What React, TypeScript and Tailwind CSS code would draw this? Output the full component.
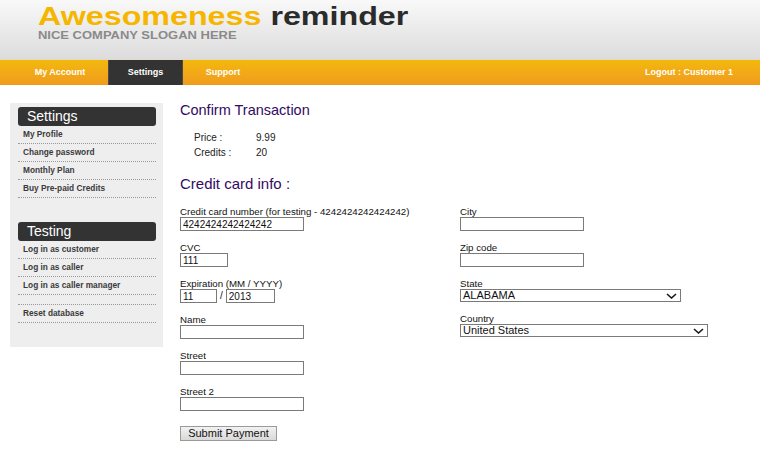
import React from "react";

const Chevron = () => (
  <svg width="11" height="6" viewBox="0 0 11 6" fill="none">
    <path d="M1 1 L5.5 5 L10 1" stroke="#1a1a1a" strokeWidth="1.6" />
  </svg>
);

const Field = ({ label, children }: { label: string; children: React.ReactNode }) => (
  <div className="mb-[12px]">
    <label className="block h-[10px] leading-[10px] text-[9.7px] text-[#111]">{label}</label>
    {children}
  </div>
);

const TextBox = ({ w, value = "" }: { w: string; value?: string }) => (
  <input
    readOnly
    value={value}
    className={`block ${w} h-[14px] border border-[#7a7a7a] bg-white px-[2px] text-[10px] leading-[12px] text-[#111] outline-none`}
  />
);

const Select = ({ w, value }: { w: string; value: string }) => (
  <div
    className={`${w} h-[13px] border border-[#7a7a7a] bg-white flex items-center justify-between pl-[2px] pr-[3px] text-[11px] leading-[11px] text-[#111]`}
  >
    <span>{value}</span>
    <Chevron />
  </div>
);

const SideBox = ({ title, items }: { title: string; items: string[] }) => (
  <div>
    <div className="h-[19px] rounded-[3px] bg-[#333] pl-[9px] text-[14px] leading-[19px] text-white">{title}</div>
    <ul>
      {items.map((it, i) => (
        <li
          key={i}
          className={`${it ? "h-[18px]" : "h-[10px]"} border-b border-dotted border-[#999] pl-[5px] text-[8.3px] font-bold leading-[17px] text-[#3a3a3a]`}
        >
          {it}
        </li>
      ))}
    </ul>
  </div>
);

export default function App() {
  return (
    <div className="w-[760px] h-[450px] bg-white" style={{ fontFamily: '"Liberation Sans", Arial, sans-serif' }}>
      <header className="h-[60px] bg-linear-to-b from-[#f9f9f9] to-[#dcdcdc] border-b border-[#e3d9c6] pl-[38px] pt-[4px]">
        <h1 className="w-max origin-left scale-x-[1.24] text-[26px] leading-[24px] font-bold">
          <span className="text-[#f6b600]">Awesomeness</span> <span className="text-[#2b2b2b]">reminder</span>
        </h1>
        <p className="mt-[2px] w-max origin-left scale-x-[1.18] text-[11px] leading-[10px] font-bold text-[#8a8a8a]">
          NICE COMPANY SLOGAN HERE
        </p>
      </header>

      <nav className="h-[25px] bg-linear-to-b from-[#f3b80b] to-[#f09b1d] flex items-stretch pl-[12px] pr-[27px] text-[9px] font-bold text-white">
        <a className="w-[96px] flex items-center justify-center">My Account</a>
        <a className="w-[75px] flex items-center justify-center bg-[#333] border-x border-[#4a4a4a]">Settings</a>
        <a className="w-[80px] flex items-center justify-center">Support</a>
        <a className="ml-auto flex items-center">Logout : Customer 1</a>
      </nav>

      <div className="flex items-start">
        <aside className="ml-[10px] mt-[18px] w-[153px] bg-[#eeeeee] pt-[4px] pl-[8px] pr-[7px] pb-[24px]">
          <SideBox title="Settings" items={["My Profile", "Change password", "Monthly Plan", "Buy Pre-paid Credits"]} />
          <div className="mt-[24px]">
            <SideBox
              title="Testing"
              items={["Log in as customer", "Log in as caller", "Log in as caller manager", "", "Reset database"]}
            />
          </div>
        </aside>

        <main className="ml-[17px] pt-[17px] flex-1">
          <h2 className="text-[14.5px] leading-[16px] text-[#330b63]">Confirm Transaction</h2>
          <div className="mt-[12px] pl-[14px] text-[10px] leading-[15px] text-[#222]">
            <div className="flex">
              <span className="w-[62px]">Price :</span>
              <span>9.99</span>
            </div>
            <div className="flex">
              <span className="w-[62px]">Credits :</span>
              <span>20</span>
            </div>
          </div>

          <h2 className="mt-[16px] text-[15px] leading-[16px] text-[#330b63]">Credit card info :</h2>

          <div className="mt-[15px] grid grid-cols-[280px_1fr]">
            <div>
              <Field label="Credit card number (for testing - 4242424242424242)">
                <TextBox w="w-[124px]" value="4242424242424242" />
              </Field>
              <Field label="CVC">
                <TextBox w="w-[48px]" value="111" />
              </Field>
              <Field label="Expiration (MM / YYYY)">
                <div className="flex items-center">
                  <TextBox w="w-[37px]" value="11" />
                  <span className="mx-[3px] text-[10px] leading-[10px] text-[#111]">/</span>
                  <TextBox w="w-[49px]" value="2013" />
                </div>
              </Field>
              <Field label="Name">
                <TextBox w="w-[124px]" />
              </Field>
              <Field label="Street">
                <TextBox w="w-[124px]" />
              </Field>
              <Field label="Street 2">
                <TextBox w="w-[124px]" />
              </Field>
              <button className="block mt-[15px] w-[97px] h-[15px] border border-[#9a9a9a] bg-linear-to-b from-[#f2f2f2] to-[#d9d9d9] text-[11px] leading-[13px] text-[#111]">
                Submit Payment
              </button>
            </div>
            <div>
              <Field label="City">
                <TextBox w="w-[124px]" />
              </Field>
              <Field label="Zip code">
                <TextBox w="w-[124px]" />
              </Field>
              <Field label="State">
                <Select w="w-[221px]" value="ALABAMA" />
              </Field>
              <Field label="Country">
                <Select w="w-[248px]" value="United States" />
              </Field>
            </div>
          </div>
        </main>
      </div>
    </div>
  );
}
